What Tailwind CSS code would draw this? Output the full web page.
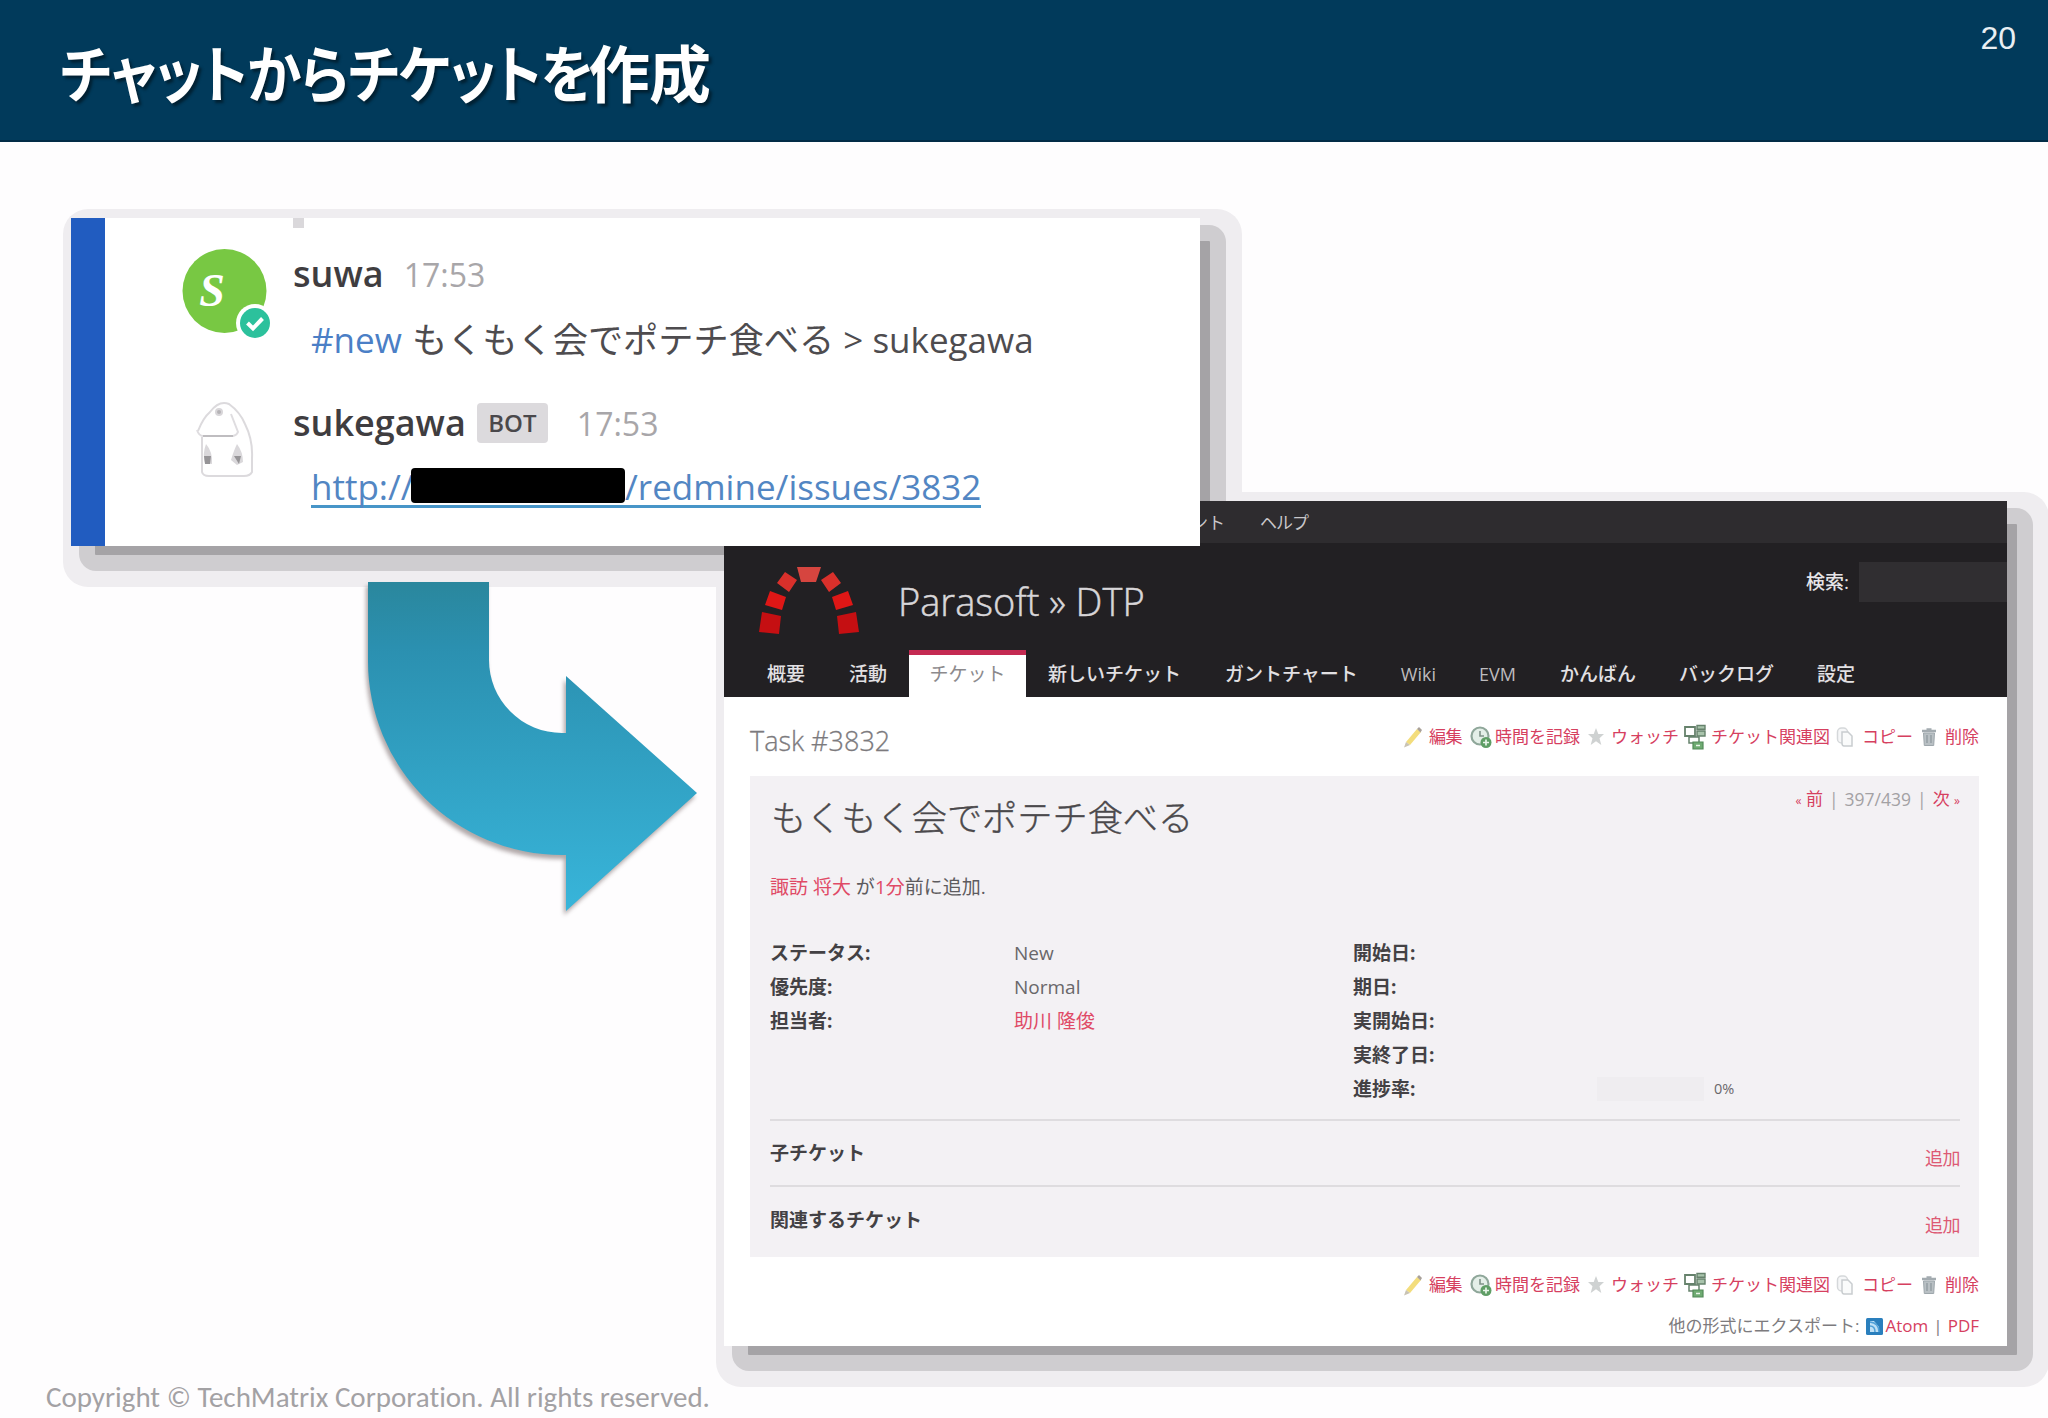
<!DOCTYPE html>
<html lang="ja">
<head>
  <meta charset="UTF-8">
  <meta name="viewport" content="width=device-width, initial-scale=1.0">
  <title>チャットからチケットを作成</title>
  <script src="https://cdn.jsdelivr.net/npm/@tailwindcss/browser@4"></script>
</head>
<body class="bg-[#fefdfe]">

  <!-- Icon sprites -->
  <svg class="hidden" xmlns="http://www.w3.org/2000/svg">
    <symbol id="pencil" viewBox="0 0 20 22">
      <path d="M3 16 14 3l4 3L7 19z" fill="#f3dd7c" />
      <path d="M14 3l2-2 3 3-1.500 2.500z" fill="#a9a19a" />
      <path d="M3 16l4 3-6 2.500z" fill="#c9c3b4" />
    </symbol>
    <symbol id="clock" viewBox="0 0 22 24">
      <circle cx="10" cy="11" r="8.500" fill="#e4efe8" stroke="#8fa79a" stroke-width="2.200" />
      <path d="M10 6v5h4" fill="none" stroke="#7f9288" stroke-width="1.600" />
      <circle cx="16" cy="17.500" r="5.500" fill="#5f9e66" />
      <path d="M16 14.500v6M13 17.500h6" stroke="#e9f5ea" stroke-width="1.700" />
    </symbol>
    <symbol id="star" viewBox="0 0 18 20">
      <path d="M9 1l2.300 6H17l-4.500 4.200L14.300 18 9 14.200 3.700 18l1.800-6.800L1 7h5.700z" fill="#cfd2d2" />
    </symbol>
    <symbol id="tree" viewBox="0 0 24 26">
      <path d="M2 3h10v9H2z" fill="#fff" stroke="#66826c" stroke-width="1.800" />
      <path d="M14 1.500h8v3.800h-8zM14 7h8v5h-8z" fill="#a9c4ac" stroke="#66826c" stroke-width="1.400" />
      <path d="M6 13h10v6H6z" fill="#fff" stroke="#66826c" stroke-width="1.500" />
      <path d="M10 18h10v7H10z" fill="#6fab72" stroke="#528a58" stroke-width="1.200" />
      <path d="M13 21.500h4" stroke="#eaf5ea" stroke-width="1.500" />
    </symbol>
    <symbol id="copy" viewBox="0 0 18 22">
      <rect x="1.500" y="2" width="10" height="15" rx="4" fill="#f6f7f8" stroke="#d5d8da" stroke-width="1.500" />
      <path d="M6 6h6l4 4v10H8q-2 0-2-3z" fill="#fafbfb" stroke="#c9cdd0" stroke-width="1.500" />
    </symbol>
    <symbol id="trash" viewBox="0 0 16 20">
      <path d="M1 4h14M5.500 2.500h5" stroke="#a3abb0" stroke-width="2.400" />
      <path d="M2.500 6h11l-.8 12.500H3.300z" fill="#b9c0c4" stroke="#9ea7ac" />
      <path d="M6 8v8M10 8v8" stroke="#8c969c" stroke-width="1.200" />
    </symbol>
  </svg>

  <div class="relative w-[2048px] h-[1418px] overflow-hidden flex flex-col justify-between font-['Open_Sans','Noto_Sans_CJK_JP',sans-serif]">

    <!-- Slide header -->
    <header class="h-[142px] bg-[#013a5b] border-b-2 border-[#022c47] flex justify-between pl-[60px] pr-8">
      <h1 class="pt-px flex text-[62px] leading-[140px] font-bold text-white whitespace-nowrap tracking-[-1px] [font-feature-settings:'palt'] [text-shadow:3px_3px_3px_rgba(0,0,0,0.45)] font-['Noto_Sans_CJK_JP',sans-serif]">
        <span class="w-[528px] origin-left scale-x-[0.888]">チャットからチケットを</span>
        <span>作成</span>
      </h1>
      <span class="pt-5 text-[32px] leading-9 text-[#e9eff3] font-['Liberation_Sans',sans-serif]">20</span>
    </header>

    <!-- Stepped shadow of the ticket window -->
    <div class="absolute left-[724px] top-[501px] w-[1283px] h-[845px] rounded-lg shadow-[17px_16px_0_-7px_#a5a3a6,17px_16px_0_9px_#cfcdd0,17px_16px_0_25px_#efedf0]"></div>

    <!-- Stepped shadow of the chat card, lies under the ticket window -->
    <div class="absolute left-[71px] top-[218px] w-[1129px] h-[328px] rounded-lg shadow-[17px_16px_0_-7px_#a5a3a6,17px_16px_0_9px_#cfcdd0,17px_16px_0_25px_#efedf0]"></div>

    <!-- Redmine ticket window -->
    <section class="absolute left-[724px] top-[501px] w-[1283px] h-[845px] bg-white">
      <div class="h-[42px] bg-[#2e2c2f] flex items-center pt-0.5 pl-[467px] gap-[35px] text-[17px] text-[#c9c7ca]">
        <span>ント</span>
        <span class="tracking-[-1px]">ヘルプ</span>
      </div>
      <div class="h-[154px] bg-[#222023] flex flex-col justify-between">
        <div class="flex justify-between">
          <div class="flex">
            <!-- Redmine arch -->
            <svg class="w-[104px] h-[72px] ml-[33px] mt-[21px]" viewBox="757 564 104 72">
              <path d="M797 567h24l-5 15h-15z" fill="#d6453f" />
              <path d="M785 572l12 8-8 12-12-9zM833 572l-12 8 8 12 12-9z" fill="#d9302b" />
              <path d="M770 591l16 6-4 13-17-5zM848 591l-16 6 4 13 17-5z" fill="#df1716" />
              <path d="M762 612l19 4-2 18-20-2zM856 612l-19 4 2 18 20-2z" fill="#c50f12" />
            </svg>
            <h2 class="ml-[37px] mt-[33px] text-[38px] leading-[50px] text-[#d8d6d9] font-light whitespace-nowrap [-webkit-text-stroke:0.5px]">Parasoft » DTP</h2>
          </div>
          <div class="flex mt-[19px] h-10 items-center gap-2.5 text-[19px] text-[#e6e4e7]">
            <span class="font-medium">検索:</span>
            <div class="w-[148px] h-10 bg-[#302e31]"></div>
          </div>
        </div>
        <nav class="h-[47px] flex items-stretch pl-[21px] text-[19px] leading-[49px] text-[#e2e0e3] whitespace-nowrap">
          <span class="px-[22px] font-medium">概要</span>
          <span class="px-[22px] font-medium">活動</span>
          <span class="w-[117px] bg-white border-t-5 border-[#c42a52] text-center leading-[39px] text-[#8c8a8d]">チケット</span>
          <span class="px-[22px] font-medium">新しいチケット</span>
          <span class="pl-[22px] pr-[21px] font-medium">ガントチャート</span>
          <span class="pl-[22px] pr-[21px] text-[18px] text-[#bdbbbe]">Wiki</span>
          <span class="px-[22px] text-[18px] text-[#bdbbbe]">EVM</span>
          <span class="pl-[22px] pr-[21px] font-medium">かんばん</span>
          <span class="px-[22px] font-medium">バックログ</span>
          <span class="px-[21px] font-medium">設定</span>
        </nav>
      </div>

      <div class="pl-[26px] pr-7">
        <div class="h-[79px] flex justify-between">
          <h3 class="leading-[88px] text-[27px] font-light text-[#7c7a7d] [-webkit-text-stroke:0.3px]">Task #3832</h3>
          <div class="h-20 flex items-center text-[17px] text-[#d6405f] whitespace-nowrap">
            <svg class="w-5 h-[22px]"><use href="#pencil" /></svg><span class="ml-[6px] mr-1 tracking-[-0.5px]">編集</span>
            <svg class="w-[22px] h-6 ml-1"><use href="#clock" /></svg><span class="ml-[3px] mr-px">時間を記録</span>
            <svg class="w-[18px] h-5 ml-1.5"><use href="#star" /></svg><span class="ml-1.5">ウォッチ</span>
            <svg class="w-6 h-[26px] ml-1"><use href="#tree" /></svg><span class="ml-1">チケット関連図</span>
            <svg class="w-[18px] h-[22px] ml-1.5"><use href="#copy" /></svg><span class="ml-2">コピー</span>
            <svg class="w-4 h-5 ml-2"><use href="#trash" /></svg><span class="ml-2">削除</span>
          </div>
        </div>

        <div class="h-[481px] bg-[#f3f1f4] pl-5 pr-[19px]">
          <div class="h-[84px] flex justify-between">
            <h3 class="ml-px text-[35.200px] leading-[82px] font-light text-[#4b494c] whitespace-nowrap [-webkit-text-stroke:0.4px]">もくもく会でポテチ食べる</h3>
            <div class="h-[46px] flex items-center gap-[6px] text-[17.500px] text-[#a3a1a4]">
              <span class="text-[#d6405f] text-[17px]"><span class="text-[12px]">«</span> 前</span>|<span>397/439</span>|<span class="text-[#d6405f] text-[17px]">次 <span class="text-[12px]">»</span></span>
            </div>
          </div>
          <p class="h-[54px] leading-[54px] text-[19px] text-[#5d5b5e]"><span class="text-[#e04a66]">諏訪 将大</span> が<span class="text-[#e04a66]">1分</span>前に追加.</p>

          <div class="mt-[22px] h-[170px] grid grid-cols-[244px_339px_244px_1fr] grid-rows-5 leading-[34px] text-[19px] text-[#69676a]">
            <b class="text-[#434144]">ステータス:</b><span>New</span>
            <b class="text-[#434144]">開始日:</b><span></span>
            <b class="text-[#434144]">優先度:</b><span>Normal</span>
            <b class="text-[#434144]">期日:</b><span></span>
            <b class="text-[#434144]">担当者:</b><span class="text-[#e04a66]">助川 隆俊</span>
            <b class="text-[#434144]">実開始日:</b><span></span>
            <span></span><span></span>
            <b class="text-[#434144]">実終了日:</b><span></span>
            <span></span><span></span>
            <b class="text-[#434144]">進捗率:</b>
            <div class="flex items-center gap-2.5 text-[14.5px]"><div class="w-[107px] h-6 bg-[#efedf0]"></div>0%</div>
          </div>

          <div class="mt-[13px] h-[66px] border-t-2 border-[#dedcdf] flex justify-between text-[19px] leading-[64px]">
            <b class="text-[#434144]">子チケット</b>
            <span class="pt-[5px] text-[18px] tracking-[-0.5px] text-[#dd5a74]">追加</span>
          </div>
          <div class="h-[66px] border-t-2 border-[#dedcdf] flex justify-between text-[19px] leading-[67px]">
            <b class="text-[#434144]">関連するチケット</b>
            <span class="pt-[5px] text-[18px] tracking-[-0.5px] text-[#dd5a74]">追加</span>
          </div>
        </div>

        <div class="h-14 flex items-center justify-end text-[17px] text-[#d6405f] whitespace-nowrap">
          <svg class="w-5 h-[22px]"><use href="#pencil" /></svg><span class="ml-[6px] mr-1 tracking-[-0.5px]">編集</span>
          <svg class="w-[22px] h-6 ml-1"><use href="#clock" /></svg><span class="ml-[3px] mr-px">時間を記録</span>
          <svg class="w-[18px] h-5 ml-1.5"><use href="#star" /></svg><span class="ml-1.5">ウォッチ</span>
          <svg class="w-6 h-[26px] ml-1"><use href="#tree" /></svg><span class="ml-1">チケット関連図</span>
          <svg class="w-[18px] h-[22px] ml-1.5"><use href="#copy" /></svg><span class="ml-2">コピー</span>
          <svg class="w-4 h-5 ml-2"><use href="#trash" /></svg><span class="ml-2">削除</span>
        </div>
        <div class="h-[26px] flex items-center justify-end text-[17px] text-[#7d7b7e] whitespace-nowrap">
          <span>他の形式にエクスポート:</span>
          <svg class="w-[17px] h-[17px] ml-1.5 mr-[3px]" viewBox="0 0 17 17">
            <rect width="17" height="17" rx="1.500" fill="#2a7fbd" />
            <path d="M4 3h4l5 6v5H4z" fill="#bfe0f5" />
            <path d="M4 8q5 0 5 6M4 4q9 1 9 10" fill="none" stroke="#4fa0d8" stroke-width="1.500" />
          </svg>
          <span class="text-[#d6405f]">Atom</span>
          <span class="px-[5px]">|</span>
          <span class="text-[#d6405f]">PDF</span>
        </div>
      </div>
    </section>

    <!-- Chat card -->
    <section class="absolute left-[71px] top-[218px] w-[1129px] h-[328px] bg-white flex">
      <div class="w-[34px] bg-[#215cc0]"></div>
      <div class="w-[188px] flex flex-col">
        <svg class="w-[96px] h-[100px] ml-[76px] mt-[28px]" viewBox="0 0 96 100">
          <circle cx="43.500" cy="45" r="42" fill="#78c843" />
          <text x="31" y="60" text-anchor="middle" font-family="Liberation Serif" font-size="46" font-weight="bold" font-style="italic" fill="#fff">S</text>
          <circle cx="74" cy="77" r="19" fill="#fff" />
          <circle cx="74" cy="77" r="15" fill="#2cc19c" />
          <path d="M66.500 77l5.500 5.500 9.500-10" fill="none" stroke="#fff" stroke-width="4" />
        </svg>
        <!-- Bot avatar: a faint sketched figure -->
        <svg class="w-[60px] h-[80px] ml-[90px] mt-[54px]" viewBox="0 0 60 80" fill="none" stroke="#dcdadd" stroke-width="2">
          <path d="M3 31Q8 18 15 12 24 0 34 4 45 12 50 24 58 40 57 58V72q-2 4-8 4H14q-6 0-7-4V37" />
          <path d="M2 30q2 6 6 6h30q4-1 5-4L36 14" stroke="#dfdde0" />
          <path d="M8 36h30" stroke="#bfbdc0" />
          <circle cx="24" cy="12" r="3" fill="#b5b3b6" stroke="#d8d6d9" />
          <path d="M11 44q7 8 6 20l-7-1q-3-8 1-19zM42 44q6 8 6 18l-6 3-6-5q3-10 6-16z" fill="#dad8db" stroke="none" />
          <path d="M9 56h7l-1 8h-5zM39 56h7l-2 8z" fill="#969497" stroke="none" />
        </svg>
      </div>

      <div class="flex-1 text-[35px] leading-10 whitespace-nowrap text-[#4e4c4f]">
        <div class="w-[11px] h-2.5 bg-[#dad8db]"></div>
        <div class="mt-[26px] flex gap-5">
          <span class="text-[36px] font-semibold text-[#3f3d40]">suwa</span>
          <span class="text-[32px] text-[#a8a6a9] pt-px">17:53</span>
        </div>
        <div class="mt-6 pl-[18px]"><span class="text-[#4b7fc6] mr-px">#new</span> <span class="text-[35.200px]">もくもく会でポテチ食べる</span> &gt; sukegawa</div>
        <div class="mt-[42px] flex items-center">
          <span class="text-[36px] font-semibold text-[#3f3d40]">sukegawa</span>
          <span class="ml-[11px] w-[71px] h-10 rounded-sm bg-[#dcdadd] text-center text-[24px] font-semibold text-[#4a484b]">BOT</span>
          <span class="ml-[29px] text-[32px] text-[#a8a6a9] pt-0.5">17:53</span>
        </div>
        <div class="mt-[23px] ml-[18px] inline-flex border-b-3 border-[#4795c8] text-[#5286c3] h-[41px]">
          <span class="w-[100px]">http://</span>
          <span class="w-[214px] h-[35px] mt-px rounded-sm bg-black"></span>
          <span>/redmine/issues/3832</span>
        </div>
      </div>
    </section>

    <!-- Curved arrow from chat to ticket -->
    <svg class="absolute left-[360px] top-[576px] w-[350px] h-[350px] drop-shadow-[-2px_4px_2px_rgba(60,40,40,0.4)]" viewBox="360 576 350 350">
      <defs>
        <linearGradient id="arrow" x1="0" y1="0" x2="0" y2="1">
          <stop offset="0" stop-color="#2a879d" />
          <stop offset="0.200" stop-color="#2b90b0" />
          <stop offset="1" stop-color="#38b5da" />
        </linearGradient>
      </defs>
      <path d="M368 582H489V660A73 73 0 0 0 562 733H566V676L697 793 566 911V855H562A194 194 0 0 1 368 661Z" fill="url(#arrow)" />
    </svg>

    <footer class="pl-[46px] h-[41px] text-[29px] leading-10 text-[#a3a1a4] whitespace-nowrap font-['Carlito','Lato',sans-serif] [font-variant-ligatures:none]">Copyright © TechMatrix Corporation. All rights reserved.</footer>
  </div>
</body>
</html>
